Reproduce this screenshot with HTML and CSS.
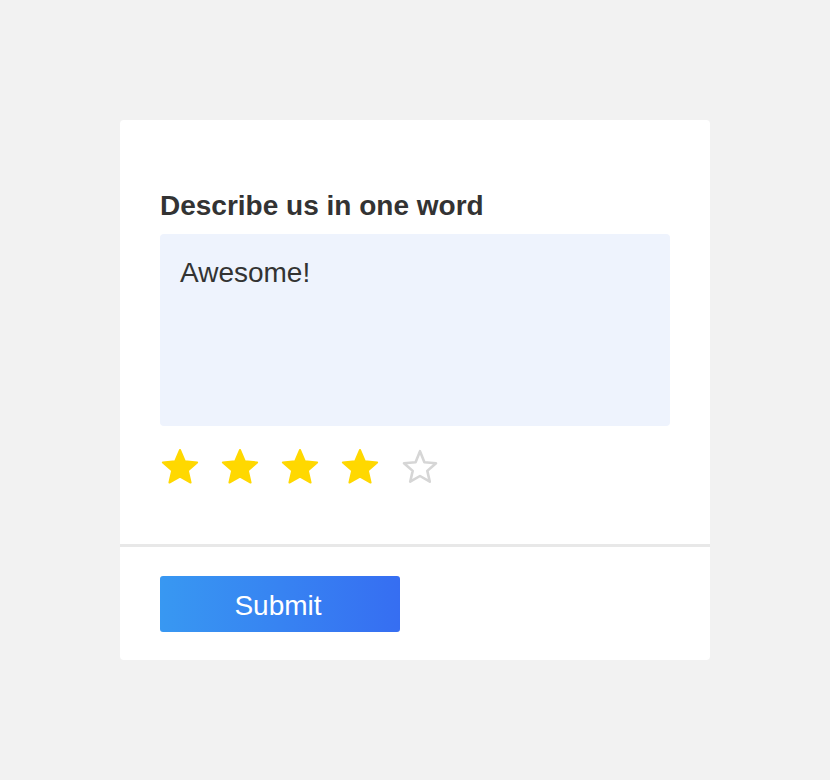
FILE: index.html
```html
<!DOCTYPE html>
<html>
<head>
<meta charset="utf-8">
<link rel="stylesheet" href="styles.css">
</head>
<body>
<div class="card">
  <div class="card-body">
    <label class="label">Describe us in one word</label>
    <div class="textarea">Awesome!</div>
    <div class="stars">
      <svg class="star on" viewBox="0 0 38 36"><path d="M19 1L23.9 12.3L36.12 13.44L26.9 21.6L29.58 33.56L19 27.6L8.42 33.56L11.1 21.6L1.88 13.44L14.1 12.3Z"/></svg>
      <svg class="star on" viewBox="0 0 38 36"><path d="M19 1L23.9 12.3L36.12 13.44L26.9 21.6L29.58 33.56L19 27.6L8.42 33.56L11.1 21.6L1.88 13.44L14.1 12.3Z"/></svg>
      <svg class="star on" viewBox="0 0 38 36"><path d="M19 1L23.9 12.3L36.12 13.44L26.9 21.6L29.58 33.56L19 27.6L8.42 33.56L11.1 21.6L1.88 13.44L14.1 12.3Z"/></svg>
      <svg class="star on" viewBox="0 0 38 36"><path d="M19 1L23.9 12.3L36.12 13.44L26.9 21.6L29.58 33.56L19 27.6L8.42 33.56L11.1 21.6L1.88 13.44L14.1 12.3Z"/></svg>
      <svg class="star off" viewBox="0 0 38 36"><path d="M19 2.2L23.4 13.2L35 14.2L26.3 21.9L28.8 32.7L19 27L9.2 32.7L11.7 21.9L3 14.2L14.6 13.2Z"/></svg>
    </div>
  </div>
  <div class="card-footer">
    <button class="btn">Submit</button>
  </div>
</div>
</body>
</html>
```

FILE: styles.css
```css
html, body {
  margin: 0;
  padding: 0;
  background: #f2f2f2;
  font-family: "Liberation Sans", Arial, sans-serif;
}
body {
  padding: 120px 120px;
}
.card {
  width: 590px;
  background: #fff;
  border-radius: 4px;
}
.card-body {
  padding: 71px 40px 59px;
  display: flex;
  flex-direction: column;
}
.label {
  font-size: 28px;
  font-weight: bold;
  color: #333;
  line-height: 30px;
  margin-bottom: 13px;
}
.textarea {
  height: 192px;
  background: #eef3fd;
  border-radius: 4px;
  padding: 24px 20px 20px;
  box-sizing: border-box;
  font-size: 28px;
  line-height: 30px;
  color: #333;
}
.stars {
  display: flex;
  gap: 22px;
  margin-top: 23px;
  margin-left: 1px;
}
.star {
  width: 38px;
  height: 36px;
  display: block;
}
.star.on path {
  fill: #ffd800;
  stroke: #ffd800;
  stroke-width: 2;
  stroke-linejoin: round;
}
.star.off path {
  fill: none;
  stroke: #d6d6d6;
  stroke-width: 2.6;
  stroke-linejoin: round;
}
.card-footer {
  border-top: 3px solid #e8e8e8;
  padding: 29px 40px 28px;
}
.btn {
  width: 240px;
  height: 56px;
  border: none;
  border-radius: 3px;
  background: linear-gradient(90deg, #3898f2, #366ef2);
  color: #fff;
  font-family: "Liberation Sans", Arial, sans-serif;
  font-size: 28px;
  display: block;
  padding: 3px 4px 0 0;
}
```
